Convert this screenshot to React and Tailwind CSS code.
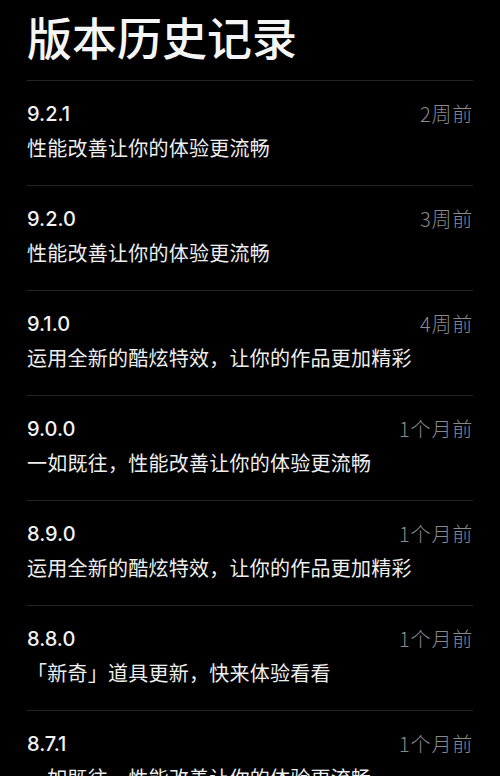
import React from "react";

const versions = [
  { v: "9.2.1", time: "2周前", desc: "性能改善让你的体验更流畅" },
  { v: "9.2.0", time: "3周前", desc: "性能改善让你的体验更流畅" },
  { v: "9.1.0", time: "4周前", desc: "运用全新的酷炫特效，让你的作品更加精彩" },
  { v: "9.0.0", time: "1个月前", desc: "一如既往，性能改善让你的体验更流畅" },
  { v: "8.9.0", time: "1个月前", desc: "运用全新的酷炫特效，让你的作品更加精彩" },
  { v: "8.8.0", time: "1个月前", desc: "「新奇」道具更新，快来体验看看" },
  { v: "8.7.1", time: "1个月前", desc: "一如既往，性能改善让你的体验更流畅" },
];

const cjk = { fontFamily: '"Noto Sans CJK SC", "Noto Sans", sans-serif' };

export default function App() {
  return (
    <div className="w-[500px] h-[776px] overflow-hidden bg-black text-white" style={cjk}>
      <div className="px-[27px]">
        <h1 className="h-[80px] pt-[12px] text-[45px] leading-[50px] font-medium text-[#f5f5f5]">
          版本历史记录
        </h1>
        {versions.map((item, index) => (
          <div key={index} className="border-t border-[#242426] pt-[21px] pb-[23px]">
            <div className="flex items-center justify-between h-[24px]">
              <span
                className="text-[20px] font-medium text-[#f2f2f2]"
                style={{ fontFamily: 'Inter, "Noto Sans", sans-serif' }}
              >
                {item.v}
              </span>
              <span className="text-[20px] tracking-[0.8px] font-light text-[#8a8a8e]">{item.time}</span>
            </div>
            <p className="mt-[8px] h-[28px] leading-[28px] text-[20px] tracking-[0.25px] text-[#eeeeee]">
              {item.desc}
            </p>
          </div>
        ))}
      </div>
    </div>
  );
}
